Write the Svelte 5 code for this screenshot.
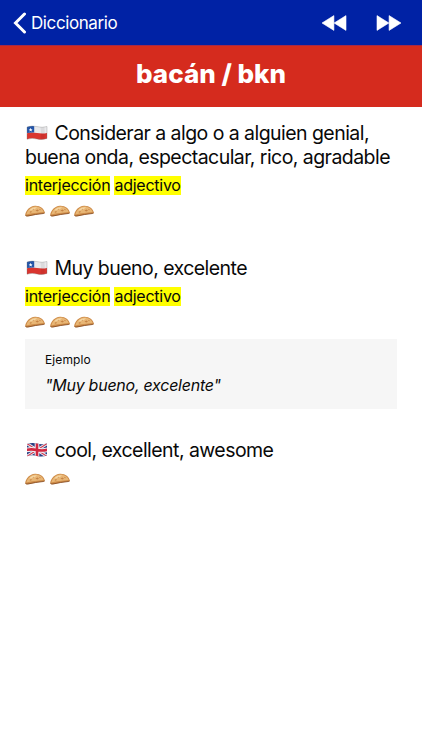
<script>
  const word = "bacán / bkn";

  const definitions = [
    {
      id: 1,
      flag: "cl",
      text: "Considerar a algo o a alguien genial, buena onda, espectacular, rico, agradable",
      tags: ["interjección", "adjectivo"],
      rating: 3,
    },
    {
      id: 2,
      flag: "cl",
      text: "Muy bueno, excelente",
      tags: ["interjección", "adjectivo"],
      rating: 3,
      example: '"Muy bueno, excelente"',
    },
    {
      id: 3,
      flag: "gb",
      text: "cool, excellent, awesome",
      tags: [],
      rating: 2,
    },
  ];
</script>

<nav class="navbar">
  <button class="back" type="button">
    <svg width="14" height="22" viewBox="0 0 14 22">
      <path d="M11.5 2 L2.5 11 L11.5 20" fill="none" stroke="#fff" stroke-width="3" stroke-linecap="round" stroke-linejoin="miter" />
    </svg>
    <span>Diccionario</span>
  </button>
  <div class="pager">
    <button type="button" aria-label="Anterior">
      <svg width="26" height="16" viewBox="0 0 26 16">
        <path d="M12.9 .6V15.4L1 8ZM25 .6V15.4L13.1 8Z" fill="#fff" stroke="#fff" stroke-width=".6" stroke-linejoin="round" />
      </svg>
    </button>
    <button type="button" aria-label="Siguiente">
      <svg width="26" height="16" viewBox="0 0 26 16">
        <path d="M1 .6V15.4L12.9 8ZM13.1 .6V15.4L25 8Z" fill="#fff" stroke="#fff" stroke-width=".6" stroke-linejoin="round" />
      </svg>
    </button>
  </div>
</nav>

<header class="word">
  <h1>{word}</h1>
</header>

<main>
  {#each definitions as item (item.id)}
    <section class="definition">
      <p class="text">
        {#if item.flag === "cl"}
          <svg class="flag" width="22" height="16" viewBox="0 0 22 16">
            <defs>
              <clipPath id="wave-{item.id}">
                <path d="M1 2Q6 .2 11 1.6T21 1.5V13.5Q16 15.4 11 14T1 14.2Z" />
              </clipPath>
            </defs>
            <g clip-path="url(#wave-{item.id})">
              <path d="M0 0H22V16H0Z" fill="#e9e9eb" />
              <path d="M0 8.4Q5 6.9 11 8T22 7.7V16H0Z" fill="#d9352f" />
              <path d="M0 0H8.2V7.5Q4 7.2 0 8.4Z" fill="#2455a8" />
              <path d="M4.6 2.7L5.2 4.2H6.7L5.5 5.1L6 6.5L4.6 5.7L3.3 6.5L3.8 5.1L2.6 4.2H4.1Z" fill="#fff" />
              <path d="M14 0Q16 8 14 16H18Q19.5 8 18 0Z" fill="#000" opacity=".06" />
            </g>
            <path d="M1 2Q6 .2 11 1.6T21 1.5V13.5Q16 15.4 11 14T1 14.2Z" fill="none" stroke="#777" stroke-width=".5" opacity=".6" />
          </svg>
        {:else}
          <svg class="flag" width="22" height="16" viewBox="0 0 22 16">
            <defs>
              <clipPath id="wave-{item.id}">
                <path d="M1 2Q6 .2 11 1.6T21 1.5V13.5Q16 15.4 11 14T1 14.2Z" />
              </clipPath>
            </defs>
            <g clip-path="url(#wave-{item.id})">
              <path d="M0 0H22V16H0Z" fill="#283e83" />
              <path d="M0 1L22 15M22 1L0 15" stroke="#e9e6ed" stroke-width="3" />
              <path d="M0 1L22 15M22 1L0 15" stroke="#cf354a" stroke-width="1.1" />
              <path d="M11 0V16M0 8Q5 6.8 11 8T22 7.6" fill="none" stroke="#f0edf1" stroke-width="4.6" />
              <path d="M11 0V16M0 8Q5 6.8 11 8T22 7.6" fill="none" stroke="#d12740" stroke-width="2.6" />
            </g>
          </svg>
        {/if}
        {item.text}
      </p>

      {#if item.tags.length > 0}
        <div class="tags">
          {#each item.tags as tag}
            <span class="tag">{tag}</span>
          {/each}
        </div>
      {/if}

      <div class="rating">
        {#each Array(item.rating) as _}
          <!-- empanada -->
          <svg width="20" height="12" viewBox="0 0 20 12">
            <path d="M.2 10C.8 5.6 4.5 1.2 10 .8C15.5 .6 19 4 19.9 7.6Q20 8.4 18.6 8.6L13 9.3L8 10.2L3 11.2Q.2 11.6 .2 10Z" fill="#cd8b48" />
            <path d="M1.4 9.4C2.6 5 6 1.9 10 1.5C14.6 1.4 17.6 3.9 18.7 7C13 7.4 7 8.3 1.4 9.4Z" fill="#e8b675" />
            <path d="M4.2 5.6Q7 2 12 2.3Q9.6 5.2 4.2 5.6Z" fill="#f5d6a2" />
            <path d="M10.5 5.5l2-1 1.5 1.2-1.8.8ZM4.5 6.9l1.6-.8.8 1-1.6.6ZM14.6 3.9l1.2.5-.5.8-1.1-.4ZM7.5 4.2l1-.5.5.7-.9.4Z" fill="#bd7638" opacity=".8" />
            <path d="M.5 10.4Q1.4 11.5 4 10.8Q10 9.4 18.3 8.5Q19.6 8.3 19.7 7.8" fill="none" stroke="#80451d" stroke-width=".8" />
          </svg>
        {/each}
      </div>

      {#if item.example}
        <div class="example">
          <div class="label">Ejemplo</div>
          <em>{item.example}</em>
        </div>
      {/if}
    </section>
  {/each}
</main>

<style>
  :global(body) {
    background: #fff;
    color: #090909;
    font-family: Inter, "Liberation Sans", sans-serif;
  }

  .navbar {
    box-sizing: border-box;
    height: 45px;
    padding: 0 20px 0 13px;
    display: flex;
    align-items: center;
    justify-content: space-between;
    background: #0022a5;
  }

  button {
    display: flex;
    align-items: center;
    padding: 0;
    border: 0;
    background: none;
    color: #fff;
    font-family: inherit;
  }

  .back {
    gap: 4px;
    font-size: 17px;
    letter-spacing: -0.4px;
  }

  .pager {
    display: flex;
    gap: 29px;
  }

  .word {
    box-sizing: border-box;
    height: 62px;
    padding-top: 13px;
    background: #d52b1e;
    border-top: 1px solid #a42849;
  }

  h1 {
    margin: 0;
    color: #fff;
    font-size: 26px;
    line-height: 30px;
    font-weight: 800;
    text-align: center;
  }

  main {
    padding: 14px 25px;
  }

  .definition {
    margin-bottom: 33px;
  }

  .definition:has(.example) {
    margin-bottom: 29px;
  }

  .text {
    margin: 0;
    font-size: 19.5px;
    line-height: 24px;
    letter-spacing: -0.55px;
  }

  .flag {
    margin: 0 1.5px 0 1px;
    vertical-align: -1px;
  }

  .tags {
    display: flex;
    align-items: center;
    gap: 4px;
    height: 28px;
    margin-top: 2px;
  }

  .tag {
    background: #ff0;
    font-size: 16px;
    line-height: 19px;
    letter-spacing: -0.25px;
  }

  .rating {
    display: flex;
    align-items: center;
    gap: 4.5px;
    height: 24px;
  }

  .text + .rating {
    margin-top: 5px;
  }

  .example {
    box-sizing: border-box;
    height: 70px;
    margin-top: 5px;
    padding: 13px 20px;
    background: #f6f6f6;
  }

  .label {
    font-size: 12px;
    line-height: 16px;
    letter-spacing: 0.1px;
  }

  em {
    display: block;
    margin-top: 7px;
    font-size: 16px;
    line-height: 20px;
    letter-spacing: -0.25px;
  }
</style>
